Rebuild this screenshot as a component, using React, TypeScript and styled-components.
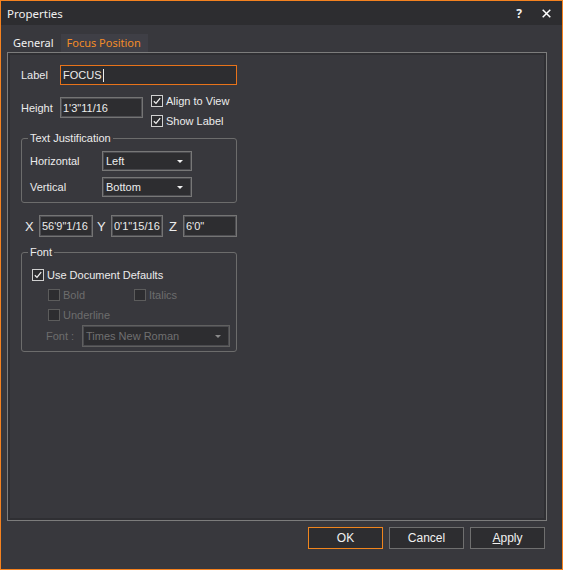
import styled, { createGlobalStyle } from 'styled-components'

const GlobalStyle = createGlobalStyle`
  html, body {
    margin: 0;
    padding: 0;
    background: #38383d;
  }
  * {
    box-sizing: border-box;
  }
`

const Window = styled.div`
  width: 563px;
  height: 570px;
  border: 1px solid #f5821f;
  background: #38383d;
  display: flex;
  flex-direction: column;
  font-family: "Liberation Sans", Arial, sans-serif;
  font-size: 11px;
  color: #ececec;
`

const TitleBar = styled.div`
  height: 24px;
  background: #2d2d30;
  display: flex;
  align-items: center;
  padding: 0 11px 0 6px;
  font-family: "Noto Sans", sans-serif;
  font-size: 11.5px;
  color: #f1f1f1;
`

const TitleText = styled.span`
  flex: 1;
`

const HelpMark = styled.span`
  font-size: 12px;
  font-weight: bold;
  margin-right: 20px;
`

const TabStrip = styled.div`
  display: flex;
  margin: 9px 0 0 6px;
  height: 18px;
`

const Tab = styled.div<{ $active?: boolean }>`
  padding: 0 7px 0 6px;
  line-height: 18px;
  font-family: "Noto Sans", sans-serif;
  font-size: 11px;
  background: ${p => (p.$active ? '#3f3f46' : 'transparent')};
  color: ${p => (p.$active ? '#f28c28' : '#f1f1f1')};
`

const Panel = styled.div`
  margin: 0 15px 0 6px;
  height: 469px;
  border: 1px solid #7c7c7c;
  box-shadow: inset 0 0 0 2px #2f2f33;
  padding: 12px 0 0 13px;
  display: flex;
  flex-direction: column;
`

const Footer = styled.div`
  display: flex;
  justify-content: flex-end;
  gap: 6px;
  padding: 6px 17px 0 0;
`

const Button = styled.div<{ $primary?: boolean }>`
  width: 75px;
  height: 22px;
  display: flex;
  align-items: center;
  justify-content: center;
  background: #2d2d30;
  border: 1px solid ${p => (p.$primary ? '#f0851d' : '#6f6f6f')};
  font-size: 12px;
  color: #f1f1f1;
`

const Row = styled.div<{ $height?: number; $top?: number }>`
  display: flex;
  align-items: center;
  height: ${p => p.$height ?? 20}px;
  margin-top: ${p => p.$top ?? 0}px;
`

const SplitRow = styled.div<{ $top: number }>`
  display: flex;
  align-items: flex-start;
  gap: 8px;
  margin-top: ${p => p.$top}px;
`

const FieldLabel = styled.span<{ $width: number; $indent?: number; $disabled?: boolean }>`
  width: ${p => p.$width}px;
  margin-left: ${p => p.$indent ?? 0}px;
  flex-shrink: 0;
  color: ${p => (p.$disabled ? '#6d6d6d' : '#ececec')};
`

const Field = styled.div<{ $width: number; $height?: number; $focused?: boolean }>`
  width: ${p => p.$width}px;
  height: ${p => p.$height ?? 20}px;
  background: #2d2d30;
  border: 1px solid ${p => (p.$focused ? '#e8731a' : '#747474')};
  box-shadow: ${p => (p.$focused ? 'none' : 'inset 0 0 0 1px #4e4e52')};
  display: flex;
  align-items: center;
  padding: 0 2px;
  white-space: nowrap;
  overflow: hidden;
  color: #ececec;
`

const Caret = styled.span`
  display: inline-block;
  width: 1px;
  height: 13px;
  background: #ececec;
  margin-left: 1px;
`

const Select = styled.div<{ $width: number; $height?: number; $disabled?: boolean }>`
  width: ${p => p.$width}px;
  height: ${p => p.$height ?? 20}px;
  background: #2d2d30;
  border: 1px solid ${p => (p.$disabled ? '#606060' : '#777777')};
  box-shadow: inset 0 0 0 1px #4a4a4e;
  display: flex;
  align-items: center;
  padding: 0 8px 0 3px;
  color: ${p => (p.$disabled ? '#707070' : '#ececec')};
`

const SelectText = styled.span`
  flex: 1;
`

const Arrow = styled.span<{ $disabled?: boolean }>`
  width: 0;
  height: 0;
  border-left: 3px solid transparent;
  border-right: 3px solid transparent;
  border-top: 3px solid ${p => (p.$disabled ? '#8a8a8a' : '#f1f1f1')};
`

const CheckRow = styled.label<{ $width?: number; $indent?: number; $disabled?: boolean }>`
  display: flex;
  align-items: center;
  height: 20px;
  width: ${p => (p.$width ? `${p.$width}px` : 'auto')};
  margin-left: ${p => p.$indent ?? 0}px;
  gap: 3px;
  color: ${p => (p.$disabled ? '#6d6d6d' : '#ececec')};
`

const Box = styled.span<{ $disabled?: boolean }>`
  width: 12px;
  height: 12px;
  border: 1px solid ${p => (p.$disabled ? '#5c5c5c' : '#d0d0d0')};
  background: #2d2d30;
  display: flex;
  align-items: center;
  justify-content: center;
  flex-shrink: 0;
`

const Group = styled.fieldset<{ $top: number }>`
  width: 216px;
  margin: ${p => p.$top}px 0 0 0;
  padding: 0;
  border: 1px solid #6c6c6c;
  border-radius: 3px;
  min-inline-size: 0;
`

const Legend = styled.legend`
  margin-left: 6px;
  padding: 0 2px;
  line-height: 14px;
  font-size: 11px;
  color: #ececec;
`

const GroupBody = styled.div<{ $left: number; $bottom: number }>`
  padding: 6px 0 ${p => p.$bottom}px ${p => p.$left}px;
  display: flex;
  flex-direction: column;
`

const Stack = styled.div<{ $gap?: number }>`
  display: flex;
  flex-direction: column;
  gap: ${p => p.$gap ?? 0}px;
`

const AxisLabel = styled.span<{ $width: number; $pad: number }>`
  width: ${p => p.$width}px;
  padding-left: ${p => p.$pad}px;
  font-size: 13px;
  color: #ececec;
  flex-shrink: 0;
`

const CheckMark = () => (
  <svg width="8" height="8" viewBox="0 0 8 8">
    <path d="M0.8 4.2 L3 6.4 L7.2 1.2" fill="none" stroke="#f1f1f1" strokeWidth="1.3" />
  </svg>
)

const CloseIcon = () => (
  <svg width="9" height="9" viewBox="0 0 9 9">
    <path d="M0.7 0.7 L8.3 8.3 M8.3 0.7 L0.7 8.3" stroke="#ffffff" strokeWidth="1.5" />
  </svg>
)

const Check = ({ label, checked, disabled, width, indent }: {
  label: string
  checked?: boolean
  disabled?: boolean
  width?: number
  indent?: number
}) => (
  <CheckRow $width={width} $indent={indent} $disabled={disabled}>
    <Box $disabled={disabled}>{checked && <CheckMark />}</Box>
    {label}
  </CheckRow>
)

const App = () => {
  return (
    <>
      <GlobalStyle />
      <Window>
        <TitleBar>
          <TitleText>Properties</TitleText>
          <HelpMark>?</HelpMark>
          <CloseIcon />
        </TitleBar>

        <TabStrip>
          <Tab>General</Tab>
          <Tab $active>Focus Position</Tab>
        </TabStrip>

        <Panel>
          <Row>
            <FieldLabel $width={39}>Label</FieldLabel>
            <Field $width={177} $focused>
              FOCUS<Caret />
            </Field>
          </Row>

          <SplitRow $top={6}>
            <Row $height={21} $top={6}>
              <FieldLabel $width={39}>Height</FieldLabel>
              <Field $width={83} $height={21}>1'3"11/16</Field>
            </Row>
            <Stack>
              <Check label="Align to View" checked />
              <Check label="Show Label" checked />
            </Stack>
          </SplitRow>

          <Group $top={0}>
            <Legend>Text Justification</Legend>
            <GroupBody $left={8} $bottom={5}>
              <Stack $gap={6}>
                <Row>
                  <FieldLabel $width={72}>Horizontal</FieldLabel>
                  <Select $width={90}>
                    <SelectText>Left</SelectText>
                    <Arrow />
                  </Select>
                </Row>
                <Row>
                  <FieldLabel $width={72}>Vertical</FieldLabel>
                  <Select $width={90}>
                    <SelectText>Bottom</SelectText>
                    <Arrow />
                  </Select>
                </Row>
              </Stack>
            </GroupBody>
          </Group>

          <Row $height={22} $top={12}>
            <AxisLabel $width={18} $pad={4}>X</AxisLabel>
            <Field $width={54} $height={22}>56'9"1/16</Field>
            <AxisLabel $width={18} $pad={4}>Y</AxisLabel>
            <Field $width={52} $height={22}>0'1"15/16</Field>
            <AxisLabel $width={20} $pad={6}>Z</AxisLabel>
            <Field $width={54} $height={22}>6'0"</Field>
          </Row>

          <Group $top={8}>
            <Legend>Font</Legend>
            <GroupBody $left={10} $bottom={4}>
              <Check label="Use Document Defaults" checked />
              <Row>
                <Check label="Bold" disabled width={86} indent={16} />
                <Check label="Italics" disabled />
              </Row>
              <Check label="Underline" disabled indent={16} />
              <Row $height={22}>
                <FieldLabel $width={36} $indent={14} $disabled>Font :</FieldLabel>
                <Select $width={148} $height={22} $disabled>
                  <SelectText>Times New Roman</SelectText>
                  <Arrow $disabled />
                </Select>
              </Row>
            </GroupBody>
          </Group>
        </Panel>

        <Footer>
          <Button $primary>OK</Button>
          <Button>Cancel</Button>
          <Button>
            <span>
              <u>A</u>pply
            </span>
          </Button>
        </Footer>
      </Window>
    </>
  )
}

export default App
